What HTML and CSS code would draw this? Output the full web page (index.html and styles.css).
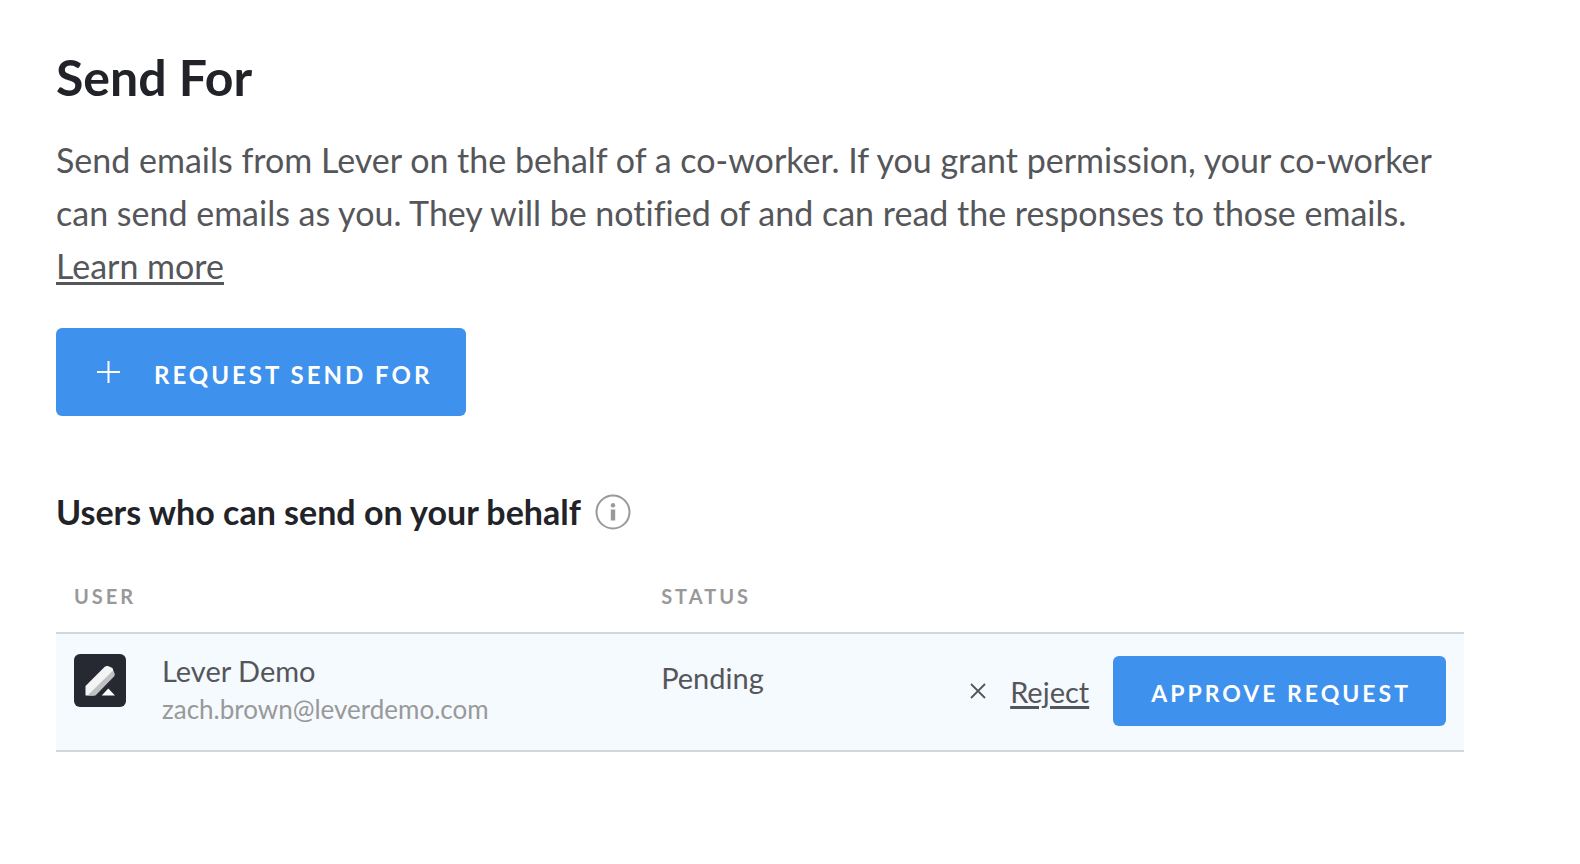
FILE: index.html
```html
<!DOCTYPE html>
<html lang="en">
<head>
  <meta charset="UTF-8" />
  <meta name="viewport" content="width=device-width, initial-scale=1.0"/>
  <title>Send For</title>
  <link rel="stylesheet" href="styles.css">
</head>
<body>
  <main class="settings">
    <h1>Send For</h1>
    <p class="intro">
      Send emails from Lever on the behalf of a co-worker. If you grant permission, your co-worker
      can send emails as you. They will be notified of and can read the responses to those emails.
      <a href="#">Learn more</a>
    </p>

    <button type="button" class="btn btn-large">
      <svg width="24" height="24" viewBox="0 0 24 24" aria-hidden="true">
        <path d="M12.500 1v22M1 12h23" fill="none" stroke="#fff" stroke-width="2"/>
      </svg>
      <span>Request Send For</span>
    </button>

    <!-- Delegates -->
    <div class="section-title">
      <h2>Users who can send on your behalf</h2>
      <svg width="36" height="36" viewBox="0 0 36 36" role="img" aria-label="Info">
        <circle cx="18" cy="18" r="16.5" fill="none" stroke="#999" stroke-width="2"/>
        <circle cx="18" cy="11.2" r="2.2" fill="#999"/>
        <path d="M15.8 15.5h4.4v11h-4.4z" fill="#999"/>
      </svg>
    </div>

    <table class="users">
      <thead>
        <tr>
          <th class="col-user">User</th>
          <th class="col-status">Status</th>
          <th aria-label="Actions"></th>
        </tr>
      </thead>
      <tbody>
        <tr>
          <td>
            <div class="user">
              <svg class="avatar" width="52" height="53" viewBox="0 0 52 53" aria-hidden="true">
                <rect width="52" height="53" rx="6" fill="#262932"/>
                <path d="M11.500 32L30.500 13Q32 11.500 34 12L38.500 14L40.500 20.500L20 41.500H11.500z" fill="#f4f4f5"/>
                <path d="M38.500 17L40.500 19V22L21.500 41.500H13.500z" fill="#bfc0c2"/>
                <path d="M34.300 34.500L41 41.500H27.700z" fill="#fff"/>
              </svg>
              <div>
                <div class="name">Lever Demo</div>
                <div class="email">zach.brown@leverdemo.com</div>
              </div>
            </div>
          </td>
          <td class="status">Pending</td>
          <td>
            <div class="actions">
              <svg width="16" height="16" viewBox="0 0 16 16" aria-hidden="true">
                <path d="M1 1l14 14M15 1L1 15" fill="none" stroke="#55565a" stroke-width="1.800"/>
              </svg>
              <a href="#">Reject</a>
              <button type="button" class="btn">Approve Request</button>
            </div>
          </td>
        </tr>
      </tbody>
    </table>
  </main>
</body>
</html>
```
FILE: styles.css
```css
* {
  margin: 0;
  padding: 0;
  box-sizing: border-box;
}

body {
  font-family: Lato, "Open Sans", sans-serif;
  font-variant-ligatures: none;
  background-color: #fff;
  color: #55565a;
}

.settings {
  padding: 47px 116px 48px 56px;
}

h1 {
  font-size: 50px;
  line-height: 60px;
  color: #222328;
}

h2 {
  font-size: 34px;
  line-height: 44px;
  color: #222328;
}

a {
  color: inherit;
  text-decoration-thickness: 3px;
  text-underline-offset: 3px;
}

.intro {
  margin-top: 26px;
  font-size: 34px;
  line-height: 53px;
}

.btn {
  display: inline-flex;
  align-items: center;
  justify-content: center;
  height: 70px;
  padding: 4px 35px 0 38px;
  border: none;
  border-radius: 6px;
  background-color: #3e91ec;
  color: #fff;
  font-family: inherit;
  font-size: 23px;
  font-weight: 700;
  letter-spacing: 3px;
  text-transform: uppercase;
  white-space: nowrap;
  cursor: pointer;
}

.btn:hover {
  background-color: #2f80d9;
}

.btn-large {
  gap: 34px;
  height: 88px;
  margin-top: 36px;
  padding: 0 34px 0 40px;
  font-size: 24px;
}

.btn-large span {
  padding-top: 4px;
}

.section-title {
  display: flex;
  align-items: center;
  gap: 14px;
  margin-top: 74px;
}

.users {
  width: 100%;
  margin-top: 40px;
  border-collapse: collapse;
  table-layout: fixed;
}

.users th {
  height: 59px;
  padding: 10px 18px 0;
  color: #999;
  font-size: 20px;
  font-weight: 700;
  letter-spacing: 3px;
  line-height: 24px;
  text-align: left;
  text-transform: uppercase;
  vertical-align: top;
}

.users .col-user {
  width: 41.7%;
}

.users .col-status {
  width: 20%;
}

.users td {
  height: 116px;
  padding: 20px 18px;
  border-top: 2px solid #d4d7da;
  border-bottom: 2px solid #d4d7da;
  background-color: #f5faff;
  font-size: 29px;
  vertical-align: top;
}

.user {
  display: flex;
  align-items: flex-start;
  gap: 36px;
}

.name {
  line-height: 34px;
}

.users .email {
  color: #999;
  font-size: 26px;
  line-height: 42px;
}

.users .status {
  padding-top: 26px;
  line-height: 36px;
}

.actions {
  display: flex;
  align-items: center;
  justify-content: flex-end;
  gap: 24px;
  padding-top: 2px;
}
```
